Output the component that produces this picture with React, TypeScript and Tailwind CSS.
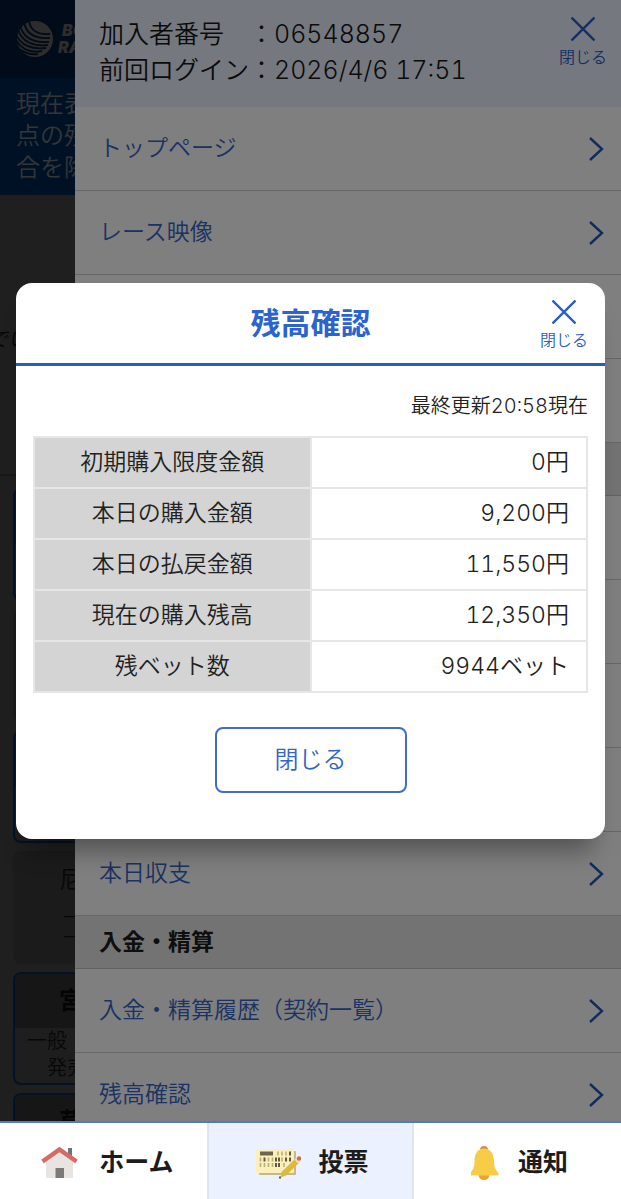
import React from "react";

function CloseIcon() {
  return (
    <svg width="24" height="24" viewBox="0 0 24 24" fill="none" stroke="currentColor" strokeWidth="2.4" aria-hidden="true">
      <path d="M0.5 0.5 23.5 23.5M23.5 0.5 0.5 23.5" />
    </svg>
  );
}

function Chevron() {
  return (
    <svg width="16" height="24" viewBox="0 0 16 24" fill="none" stroke="currentColor" strokeWidth="2.4" aria-hidden="true">
      <path d="M1 1 13 12 1 23" />
    </svg>
  );
}

function CloseButton() {
  return (
    <button type="button" className="flex flex-col items-center gap-[6px] text-base leading-5 text-[#2b5fcb]">
      <CloseIcon />
      <span>閉じる</span>
    </button>
  );
}

function Logo() {
  return (
    <div className="flex items-center gap-1 text-[#5c5a56]">
      <svg width="38" height="38" viewBox="0 0 38 38" fill="none" aria-hidden="true">
        <circle cx="19" cy="19" r="18" fill="currentColor" />
        <g stroke="#031633" strokeWidth="1.8">
          <path d="M13 0C14 11 21 15 34 14" />
          <path d="M8 2C10 14 19 19 34 18" />
          <path d="M4 5C7 18 18 23 33 22" />
          <path d="M2 9C5 21 17 27 32 25" />
          <path d="M0 14C4 25 16 30 30 28" />
          <path d="M0 20C5 29 14 33 26 31" />
          <path d="M1 27C7 33 14 35 22 34" />
        </g>
      </svg>
      <div className="text-base font-black leading-[17px] italic">
        <div className="pl-1">BO</div>
        <div>RA</div>
      </div>
    </div>
  );
}

function VenueCard({ name, open, lines }: { name?: string; open: boolean; lines?: React.ReactNode }) {
  return (
    <div
      className={
        open
          ? "h-[113px] shrink-0 overflow-hidden rounded-lg border-2 border-[#08244f] bg-[#3c3c3c]"
          : "h-[113px] shrink-0 overflow-hidden rounded-lg border-2 border-[#363636] bg-[#363636]"
      }
    >
      <div
        className={
          open
            ? "h-[54px] bg-[#2c2c2c] pl-11 text-2xl leading-[54px] font-bold text-[#080808]"
            : "h-[54px] pl-11 text-2xl leading-[54px] text-[#101010]"
        }
      >
        {name}
      </div>
      {lines}
    </div>
  );
}

function BackgroundPage() {
  return (
    <div className="absolute inset-0 flex flex-col overflow-hidden bg-[#3e3e3e]">
      <header className="flex h-[78px] shrink-0 items-center bg-[#031633] pl-4">
        <Logo />
      </header>
      <div className="h-[117px] shrink-0 bg-[#00234c] pt-[10px] pl-4 text-2xl leading-8 text-[#686a6e]">
        <p>現在表</p>
        <p>点の残</p>
        <p>合を除</p>
      </div>
      <div className="flex h-[281px] shrink-0 items-center border-b-2 border-[#303030] pt-2 text-xl text-[#0c0c0c]">
        <p className="-ml-3 italic">でい</p>
      </div>
      <div className="flex flex-col gap-2 px-[13px] pt-3">
        <VenueCard open />
        <VenueCard open={false} />
        <VenueCard open />
        <VenueCard
          open={false}
          name="尼"
          lines={
            <div className="pl-12 text-base leading-5 text-[#101010]">
              <p>一</p>
              <p>一</p>
            </div>
          }
        />
        <VenueCard
          open
          name="宮"
          lines={
            <div className="pl-3 text-xl leading-[27px] text-[#101010]">
              <p>一般</p>
              <p className="pl-5">発売</p>
            </div>
          }
        />
        <VenueCard open name="芦" />
      </div>
    </div>
  );
}

function MenuLink({ label }: { label: string }) {
  return (
    <a href="#" className="flex h-[84px] items-center justify-between border-b border-[#cecece] bg-white pr-4 pl-6 text-[23px] text-[#3565c8]">
      <span>{label}</span>
      <span className="text-[#2456bd]">
        <Chevron />
      </span>
    </a>
  );
}

function MenuHeading({ label }: { label?: string }) {
  return (
    <h2 className="flex h-[53px] items-center border-b border-[#c4c4c4] bg-[#e6e6e6] pl-6 text-[23px] font-bold text-[#1c1c1c]">
      {label}
    </h2>
  );
}

function MenuSpacer() {
  return <div className="h-[84px] border-b border-[#cecece] bg-white" />;
}

function Drawer() {
  return (
    <aside className="absolute inset-y-0 right-0 left-[75px] overflow-hidden bg-white">
      <div className="flex h-[107px] items-start justify-between bg-[#eaf1fd] pr-[14px] pl-6">
        <div className="pt-4 text-[25px] leading-9 text-[#161616]">
          <p>加入者番号　：06548857</p>
          <p>前回ログイン：2026/4/6 17:51</p>
        </div>
        <div className="pt-[17px]">
          <CloseButton />
        </div>
      </div>
      <nav>
        <MenuLink label="トップページ" />
        <MenuLink label="レース映像" />
        <MenuSpacer />
        <MenuSpacer />
        <MenuHeading />
        <MenuSpacer />
        <MenuSpacer />
        <MenuSpacer />
        <MenuSpacer />
        <MenuLink label="本日収支" />
        <MenuHeading label="入金・精算" />
        <MenuLink label="入金・精算履歴（契約一覧）" />
        <MenuLink label="残高確認" />
      </nav>
    </aside>
  );
}

const rows = [
  ["初期購入限度金額", "0円"],
  ["本日の購入金額", "9,200円"],
  ["本日の払戻金額", "11,550円"],
  ["現在の購入残高", "12,350円"],
  ["残ベット数", "9944ベット"],
];

function BalanceDialog() {
  return (
    <section
      role="dialog"
      aria-labelledby="balance-title"
      className="w-full overflow-hidden rounded-2xl bg-white shadow-[0_24px_24px_-12px_rgba(0,0,0,0.35)]"
    >
      <header className="grid h-[83px] grid-cols-[1fr_auto_1fr] border-b-3 border-[#2b5cc6] px-[17px]">
        <h1 id="balance-title" className="col-start-2 self-center text-3xl font-bold text-[#2b63cf]">
          残高確認
        </h1>
        <div className="justify-self-end pt-[17px]">
          <CloseButton />
        </div>
      </header>
      <div className="px-[17px] pt-6 pb-[46px]">
        <p className="text-right text-xl leading-8 text-[#222]">最終更新20:58現在</p>
        <table className="mt-[14px] w-full table-fixed border-collapse text-[23px] text-[#222]">
          <tbody>
            {rows.map(([label, value]) => (
              <tr key={label} className="h-[51px]">
                <th scope="row" className="w-1/2 border-2 border-[#e6e6e6] bg-[#d4d4d4] p-0 text-center font-[350]">
                  {label}
                </th>
                <td className="border-2 border-[#e6e6e6] py-0 pr-[17px] pl-0 text-right">{value}</td>
              </tr>
            ))}
          </tbody>
        </table>
        <div className="mt-[34px] flex justify-center">
          <button type="button" className="h-[66px] w-48 rounded-lg border-2 border-[#3f6ccd] text-2xl text-[#3565c8]">
            閉じる
          </button>
        </div>
      </div>
    </section>
  );
}

function HomeIcon() {
  return (
    <svg width="45" height="36" viewBox="0 0 45 36" aria-hidden="true">
      <path d="M31 3h4v11h-4z" fill="#6b7577" />
      <path d="M9 15 22.500 4 36 15V33H9Z" fill="#e7e4e1" />
      <path d="M18.500 23H27V33H18.500Z" fill="#7c7a79" />
      <path d="M5.500 16.500 22.500 4.500 39.500 16.500" fill="none" stroke="#d96a62" strokeWidth="4.500" />
    </svg>
  );
}

function TicketIcon() {
  return (
    <svg width="45" height="36" viewBox="0 0 45 36" aria-hidden="true">
      <rect x="3" y="6" width="37" height="24" rx="1" fill="#c4b98b" />
      <rect x="0" y="4" width="38" height="24" rx="1" fill="#fbf0b9" />
      <rect x="4" y="6.500" width="13" height="4" fill="#6b6550" />
      <path d="M22 6.500v4M26 6.500v4M30 6.500v4M4.500 12.500v4M12.500 12.500v4M16.500 12.500v4M26 12.500v4M4.500 18v4M8.500 18v4M12.500 18v4M16.500 18v4M28 18v4" stroke="#b9ae7d" strokeWidth="1.600" />
      <path d="M34 6.500v4M8.500 12.500v4M20 12.500v4M23 12.500v4M30 12.500v4M34 12.500v4M20 18v4M23 18v4" stroke="#5f5942" strokeWidth="2" />
      <path d="M38.500 14.500 42.500 18.500 30 30.500 24.500 32.500 25.500 27Z" fill="#dfb83f" />
      <path d="M38.500 14.500 40.500 12.500 44.500 16.500 42.500 18.500Z" fill="#eddcc5" />
      <circle cx="43" cy="13.500" r="2.200" fill="#cf6b5b" />
      <path d="M23 31.500h2v2h-2z" fill="#5f5942" />
    </svg>
  );
}

function BellIcon() {
  return (
    <svg width="30" height="36" viewBox="0 0 30 36" aria-hidden="true">
      <circle cx="13" cy="5" r="4" fill="#dc8846" />
      <circle cx="13" cy="29.500" r="5.500" fill="#efa32f" />
      <path d="M13 3.500C6.500 3.500 3.500 9 3.500 16C3.500 22 2 24.500 0 27C-1 29-.500 30.500 1 30.500H26C28 30.500 28 28.500 26.500 27C24.500 24.500 23 22 23 16C23 9 19.500 3.500 13 3.500Z" fill="#f7cd48" />
    </svg>
  );
}

function BottomNav() {
  const item = "flex items-center justify-center gap-[17px] pt-1 pl-1 text-[25px] font-bold text-[#1c1c1c]";
  return (
    <nav className="relative grid h-[78px] shrink-0 grid-cols-3 border-t-2 border-[#4b7bc9] bg-white">
      <a href="#" className={item}>
        <HomeIcon />
        ホーム
      </a>
      <a href="#" className={`${item} border-x-2 border-[#dfe5ef] bg-[#ebf1fe]`}>
        <TicketIcon />
        投票
      </a>
      <a href="#" className={item}>
        <BellIcon />
        通知
      </a>
    </nav>
  );
}

export default function App() {
  return (
    <div
      lang="ja"
      className="relative flex h-screen flex-col overflow-hidden font-['Inter','Noto_Sans_CJK_JP',sans-serif] font-[350] tabular-nums"
    >
      <BackgroundPage />
      <Drawer />
      <main className="relative flex flex-1 items-center bg-black/50 px-4">
        <BalanceDialog />
      </main>
      <BottomNav />
    </div>
  );
}
